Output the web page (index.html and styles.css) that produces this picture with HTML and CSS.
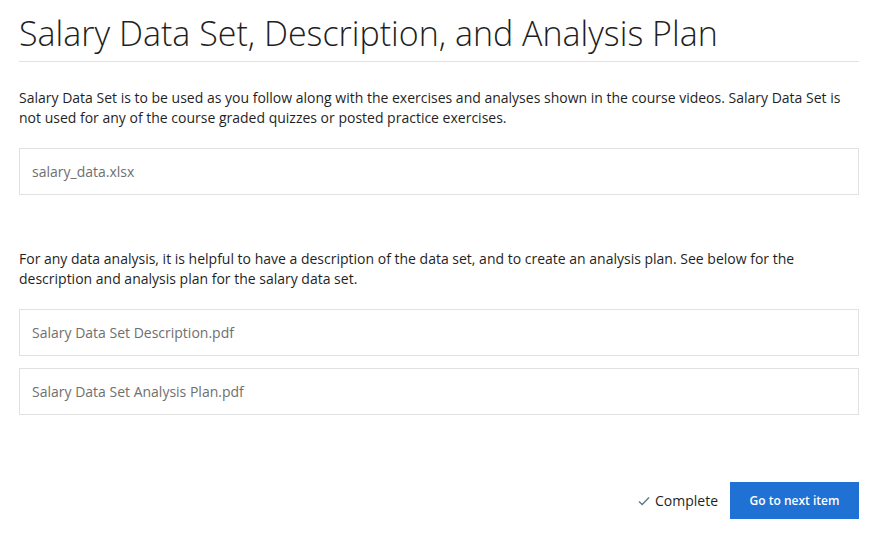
FILE: index.html
```html
<!DOCTYPE html>
<html>
<head>
<meta charset="utf-8">
<link rel="stylesheet" href="styles.css">
</head>
<body>
<main class="page">
  <h1 class="title">Salary Data Set, Description, and Analysis Plan</h1>
  <p class="text first">Salary Data Set is to be used as you follow along with the exercises and analyses shown in the course videos. Salary Data Set is not used for any of the course graded quizzes or posted practice exercises.</p>
  <div class="asset">salary_data.xlsx</div>
  <p class="text second">For any data analysis, it is helpful to have a description of the data set, and to create an analysis plan. See below for the description and analysis plan for the salary data set.</p>
  <div class="asset">Salary Data Set Description.pdf</div>
  <div class="asset gap">Salary Data Set Analysis Plan.pdf</div>
  <div class="footer">
    <span class="complete"><svg class="check" width="12" height="10" viewBox="0 0 12 10"><path d="M1 5.5 L4.2 8.5 L11 1.5" fill="none" stroke="#5b7b86" stroke-width="1.4"/></svg>Complete</span>
    <button class="next">Go to next item</button>
  </div>
</main>
</body>
</html>
```
FILE: styles.css
```css
html, body {
  margin: 0;
  padding: 0;
  background: #fff;
}
.page {
  width: 840px;
  padding: 0 0 0 19px;
  font-family: "Open Sans", sans-serif;
  color: #1f1f1f;
}
.title {
  margin: 0;
  padding: 12px 0 7px;
  font-size: 34px;
  font-weight: 300;
  line-height: 42px;
  color: #1f1f1f;
  border-bottom: 1px solid #e1e1e1;
}
.text {
  margin: 0;
  font-size: 14px;
  line-height: 20px;
}
.text.first {
  margin-top: 26px;
}
.text.second {
  margin-top: 54px;
}
.asset {
  margin-top: 20px;
  height: 45px;
  border: 1px solid #e1e1e1;
  padding: 0 12px;
  display: flex;
  align-items: center;
  font-size: 14px;
  color: #6f6f6f;
}
.asset.gap {
  margin-top: 12px;
}
.footer {
  margin-top: 67px;
  display: flex;
  justify-content: flex-end;
  align-items: center;
  gap: 12px;
}
.complete {
  display: flex;
  align-items: center;
  gap: 5px;
  font-size: 14px;
  color: #1f1f1f;
}
.next {
  width: 129px;
  height: 37px;
  border: none;
  background: #1f72d4;
  color: #fff;
  font-family: "Open Sans", sans-serif;
  font-size: 12px;
  font-weight: 600;
  padding: 0;
  cursor: pointer;
}
```
